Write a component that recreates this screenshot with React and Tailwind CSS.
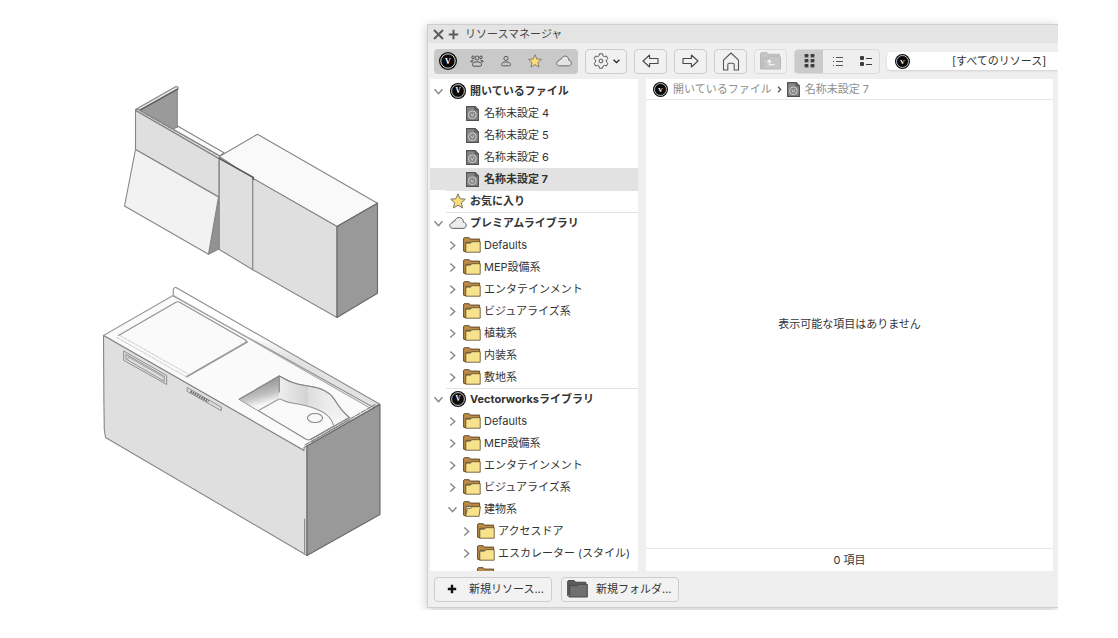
import { useState } from "react";
import clsx from "clsx";

function Logo({ size = 16 }) {
    return (
        <svg width={size} height={size} viewBox="0 0 20 20" className="shrink-0">
            <circle cx="10" cy="10" r="10" fill="#0a0a0a" />
            <circle cx="10" cy="10" r="8" fill="none" stroke="#f2f2f2" strokeWidth="1" />
            <text x="10" y="13" textAnchor="middle" fontSize="9" fontWeight="700" fontFamily="Liberation Serif, serif" fill="#fff">V</text>
        </svg>
    );
}

function FileIcon() {
    return (
        <svg width="13" height="15" viewBox="0 0 13 15" className="shrink-0">
            <path d="M.6.6h8.6l3.2 3.2v10.6H.6z" fill="#868686" stroke="#505050" strokeWidth="1.1" />
            <path d="M9 .8v3.2h3.2" fill="#6a6a6a" stroke="#505050" strokeWidth=".9" />
            <circle cx="6.3" cy="8.8" r="3.9" fill="none" stroke="#d4d4d4" strokeWidth=".9" />
            <path d="M4.8 7.4l1.5 3 1.5-3" fill="none" stroke="#d4d4d4" strokeWidth=".9" />
        </svg>
    );
}

function FolderIcon({ open }) {
    return (
        <svg width="18" height="16" viewBox="0 0 18 16" className="shrink-0">
            <path d="M.6 14.200V1.300l.6-.6h5l1 1.400h9.400v3.200H3v9.600z" fill="#bd8c45" stroke="#5e4c30" strokeWidth="1" strokeLinejoin="round" />
            {open ? (
                <path d="M2.600 15.300L4.400 7.200h3.800l1.200-1.500h8l-1.400 9.600z" fill="#f8e28c" stroke="#6a5a38" strokeWidth=".9" strokeLinejoin="round" />
            ) : (
                <path d="M2.800 15.200V6.200h4.700l1.200-1.500h8.500v10.500z" fill="#f8e28c" stroke="#6a5a38" strokeWidth=".9" strokeLinejoin="round" />
            )}
        </svg>
    );
}

function StarIcon({ size = 16 }) {
    return (
        <svg width={size} height={size} viewBox="0 0 16 16" className="shrink-0">
            <path d="M8 .9l2.100 4.800 5.200.5-3.900 3.500 1.100 5.200L8 12.200l-4.500 2.700 1.100-5.200L.7 6.200l5.200-.5z" fill="#fadd78" stroke="#7a7468" strokeWidth="1" strokeLinejoin="round" />
        </svg>
    );
}

function CloudIcon({ size = 18, fill = "#ececec" }) {
    return (
        <svg width={size} height="14" viewBox="0 0 18 14" className="shrink-0">
            <path d="M4.200 12.400C2 12.400.8 11.200.8 9.600c0-1.500 1-2.500 2.600-2.700C3.400 5.500 4.600 4.800 5.800 5 6.600 2.600 8.400 1.300 10.400 1.500c2.600.2 4 2.100 3.900 4.600 1.900.4 2.900 1.600 2.900 3.200 0 1.900-1.300 3.100-3.200 3.100z" fill={fill} stroke="#606060" strokeWidth="1" />
        </svg>
    );
}

function Chevron({ open }) {
    return (
        <svg width="11" height="11" viewBox="0 0 11 11" fill="none" stroke="#858585" strokeWidth="1.4" className="shrink-0">
            <path d={open ? "M1.500 3.300l4 4.400 4-4.400" : "M3.300 1.500l4.400 4-4.400 4"} />
        </svg>
    );
}

function GroupIcon() {
    return (
        <svg width="14" height="12" viewBox="0 0 14 12" fill="none" stroke="#505050" strokeWidth="1">
            <circle cx="3" cy="2.300" r="1.300" />
            <circle cx="11" cy="2.300" r="1.300" />
            <circle cx="7" cy="3" r="2" />
            <path d="M3.600 5.200C1.500 5.200.7 5.800.7 6.800h2.500M10.400 5.200c2.100 0 2.900.6 2.900 1.600h-2.500M2.500 9.800c0-2 1.500-2.900 4.500-2.900s4.500.9 4.500 2.900c0 .9-.5 1.400-1.400 1.400H3.900c-.9 0-1.400-.5-1.400-1.400z" />
        </svg>
    );
}

function UserIcon() {
    return (
        <svg width="12" height="12" viewBox="0 0 12 12" fill="none" stroke="#5a5a5a" strokeWidth="1">
            <circle cx="6" cy="3.400" r="2.100" />
            <path d="M1.500 9.600c0-1.800 1.500-2.600 4.500-2.600s4.500.8 4.500 2.600c0 .8-.4 1.200-1.200 1.200H2.700c-.8 0-1.200-.4-1.200-1.200z" />
        </svg>
    );
}

function GearIcon() {
    return (
        <svg width="16" height="16" viewBox="0 0 16 16" fill="none" stroke="#555" strokeWidth="1" strokeLinejoin="round">
            <path d="M6.500.8h3l.5 2 1.400.8 2-.6 1.500 2.600-1.500 1.400v2l1.500 1.400-1.500 2.600-2-.6-1.400.8-.5 2h-3l-.5-2-1.400-.8-2 .6-1.500-2.600L2.600 9V7L1.100 5.600 2.600 3l2 .6L6 2.800z" />
            <circle cx="8" cy="8" r="1.900" />
        </svg>
    );
}

function ArrowIcon({ flip }) {
    return (
        <svg width="17" height="14" viewBox="0 0 17 14" fill="none" stroke="#484848" strokeWidth="1.100" strokeLinejoin="round" className={flip ? "rotate-180" : ""}>
            <path d="M1 7l6.600-6v3.500H16v5H7.600V13z" />
        </svg>
    );
}

function HomeIcon() {
    return (
        <svg width="18" height="19" viewBox="0 0 18 19" fill="none" stroke="#555" strokeWidth="1.100" strokeLinejoin="round">
            <path d="M1.500 18V8.200L9 1l7.500 7.200V18h-4.300v-5.200c0-1-.7-1.600-1.600-1.600H7.400c-.9 0-1.600.6-1.600 1.600V18z" />
        </svg>
    );
}

function UpFolderIcon() {
    return (
        <svg width="21" height="18" viewBox="0 0 21 18">
            <path d="M.5 17V1.500l.7-.8h6l1.200 1.600h11.100V5h1v12z" fill="#c6c6c6" stroke="#b8b8b8" />
            <path d="M3 16.500V6h6l1.500-1.800h9.500" fill="none" stroke="#b8b8b8" />
            <path d="M9.300 8.300v4.300h5.200M7.300 10.300l2-2.300 2 2.300" fill="none" stroke="#f3f3f3" strokeWidth="1.200" />
        </svg>
    );
}

function GridIcon() {
    return (
        <svg width="11" height="14" viewBox="0 0 11 14" fill="#3c3c3c">
            {[0, 6].map((x) =>
                [0, 5, 10].map((y) => (
                    <g key={`${x}-${y}`}>
                        <rect x={x + 0.5} y={y} width="4" height="3" rx="1" />
                        <rect x={x + 0.5} y={y + 3.2} width="4" height=".8" opacity=".5" />
                    </g>
                ))
            )}
        </svg>
    );
}

function ListIcon() {
    return (
        <svg width="11" height="9" viewBox="0 0 11 9" fill="#555">
            {[0, 4, 8].map((y) => (
                <g key={y}>
                    <rect x="1" y={y} width="1" height="1" />
                    <rect x="4" y={y} width="7" height="1" />
                </g>
            ))}
        </svg>
    );
}

function DetailIcon() {
    return (
        <svg width="13" height="11" viewBox="0 0 13 11" fill="#3c3c3c">
            {[0, 6].map((y) => (
                <g key={y}>
                    <rect x="1" y={y} width="4" height="4" rx="1" />
                    <rect x="7" y={y + 2} width="6" height="1" />
                </g>
            ))}
        </svg>
    );
}

const premium = ["Defaults", "MEP設備系", "エンタテインメント", "ビジュアライズ系", "植栽系", "内装系", "敷地系"];
const library = ["Defaults", "MEP設備系", "エンタテインメント", "ビジュアライズ系"];

const rows = [
    { id: "open", label: "開いているファイル", level: 0, icon: "logo", open: true, bold: true },
    ...[4, 5, 6, 7].map((n) => ({ id: `file-${n}`, label: `名称未設定 ${n}`, level: 1, icon: "file" })),
    { id: "fav", label: "お気に入り", level: 0, icon: "star", bold: true, line: true },
    { id: "premium", label: "プレミアムライブラリ", level: 0, icon: "cloud", open: true, bold: true, line: true },
    ...premium.map((label) => ({ id: `p-${label}`, label, level: 1, icon: "folder", open: false })),
    { id: "vw", label: "Vectorworksライブラリ", level: 0, icon: "logo", open: true, bold: true, line: true },
    ...library.map((label) => ({ id: `v-${label}`, label, level: 1, icon: "folder", open: false })),
    { id: "building", label: "建物系", level: 1, icon: "folder", open: true },
    { id: "door", label: "アクセスドア", level: 2, icon: "folder", open: false },
    { id: "escalator", label: "エスカレーター (スタイル)", level: 2, icon: "folder", open: false },
    { id: "next", label: "", level: 2, icon: "folder" },
];

const indent = ["pl-[3px]", "pl-[17px]", "pl-[31px]"];

function RowIcon({ row }) {
    if (row.icon === "logo") return <Logo />;
    if (row.icon === "file") return <FileIcon />;
    if (row.icon === "star") return <StarIcon />;
    if (row.icon === "cloud") return <CloudIcon />;
    return <FolderIcon open={row.open} />;
}

function TreeRow({ row, selected, onSelect }) {
    return (
        <li className="relative h-[22px]">
            {row.line && <span className="absolute top-0 right-0 left-4 h-px bg-[#e2e2e2]" />}
            <button
                type="button"
                aria-label={row.label || "フォルダ"}
                onClick={() => onSelect(row.id)}
                className={clsx(
                    "flex h-full w-full items-center gap-[3px] whitespace-nowrap text-left",
                    indent[row.level],
                    selected && "bg-[#e2e2e2]",
                    (row.bold || selected) && "font-bold"
                )}
            >
                <span className="w-[13px] shrink-0">{row.open !== undefined && <Chevron open={row.open} />}</span>
                <span className="flex w-[18px] shrink-0 justify-center">
                    <RowIcon row={row} />
                </span>
                <span>{row.label}</span>
            </button>
        </li>
    );
}

function ToolButton({ label, className, children }) {
    return (
        <button
            type="button"
            aria-label={label}
            className={clsx("flex h-[25px] shrink-0 items-center justify-center rounded border border-[#cdcdcd] bg-[#f1f1f1]", className)}
        >
            {children}
        </button>
    );
}

function Toolbar() {
    const [view, setView] = useState("grid");
    const sources = [
        ["開いているファイル", <Logo size={18} />],
        ["ワークグループ", <GroupIcon />],
        ["ユーザ", <UserIcon />],
        ["お気に入り", <StarIcon size={14} />],
        ["ライブラリ", <CloudIcon size={16} fill="#e4e4e4" />],
    ];
    const views = [
        ["grid", "サムネイル", <GridIcon />],
        ["list", "リスト", <ListIcon />],
        ["detail", "詳細", <DetailIcon />],
    ];

    return (
        <div className="flex h-9 shrink-0 items-center gap-[7px] pl-1.5">
            <div className="flex h-[25px] w-36 shrink-0 rounded bg-[#c9c9c9]">
                {sources.map(([label, icon]) => (
                    <button key={label} type="button" aria-label={label} className="flex flex-1 items-center justify-center">
                        {icon}
                    </button>
                ))}
            </div>
            <ToolButton label="設定" className="w-[42px] gap-1">
                <GearIcon />
                <svg width="7" height="5" viewBox="0 0 7 5" fill="none" stroke="#222" strokeWidth="1.300">
                    <path d="M.6.8l2.900 2.900L6.400.8" />
                </svg>
            </ToolButton>
            <ToolButton label="戻る" className="w-[33px]"><ArrowIcon /></ToolButton>
            <ToolButton label="進む" className="w-[33px]"><ArrowIcon flip /></ToolButton>
            <ToolButton label="ホーム" className="w-[33px]"><HomeIcon /></ToolButton>
            <ToolButton label="上の階層へ" className="w-[33px] border-[#dcdcdc]"><UpFolderIcon /></ToolButton>
            <div className="flex h-[25px] w-[86px] shrink-0 overflow-hidden rounded border border-[#dadada]">
                {views.map(([id, label, icon]) => (
                    <button
                        key={id}
                        type="button"
                        aria-label={label}
                        onClick={() => setView(id)}
                        className={clsx("flex flex-1 items-center justify-center", view === id && "bg-[#cbcbcb]")}
                    >
                        {icon}
                    </button>
                ))}
            </div>
            <div className="relative min-w-0 flex-1">
                <span className="pointer-events-none absolute top-0 left-2 flex h-[18px] items-center">
                    <Logo size={15} />
                </span>
                <select aria-label="リソースの種類" className="block h-[18px] w-full appearance-none rounded-l bg-white pl-[65px] shadow-sm outline-none">
                    <option>[すべてのリソース]</option>
                </select>
            </div>
        </div>
    );
}

function ResourceManager() {
    const [selected, setSelected] = useState("file-7");

    return (
        <section className="flex h-full min-w-0 flex-1 flex-col overflow-hidden border-t border-b border-l border-[#cfcfcf] bg-[#efefef] shadow-[0_2px_10px_rgba(0,0,0,0.22)]">
            <header className="flex h-[18px] shrink-0 items-center bg-[#e4e4e4] pl-[5px] text-[#444]">
                <button type="button" aria-label="閉じる" className="flex w-[15px]">
                    <svg width="11" height="11" viewBox="0 0 11 11" stroke="#5c5c5c" strokeWidth="2"><path d="M1 1l9 9M10 1l-9 9" /></svg>
                </button>
                <button type="button" aria-label="拡大" className="flex w-[17px]">
                    <svg width="11" height="11" viewBox="0 0 11 11" stroke="#5c5c5c" strokeWidth="2"><path d="M5.500 .8v9.400M.8 5.500h9.400" /></svg>
                </button>
                <h1>リソースマネージャ</h1>
            </header>

            <Toolbar />

            <div className="flex min-h-0 flex-1 gap-2 pr-[5px] pl-0.5">
                <nav className="w-[208px] shrink-0 overflow-hidden bg-white pt-px">
                    <ul>
                        {rows.map((row) => (
                            <TreeRow key={row.id} row={row} selected={row.id === selected} onSelect={setSelected} />
                        ))}
                    </ul>
                </nav>

                <main className="flex min-w-0 flex-1 flex-col bg-white">
                    <div className="flex h-[21px] shrink-0 items-center gap-[5px] border-b border-[#e6e6e6] pl-[7px] text-[#8e8e8e]">
                        <Logo size={15} />
                        <span>開いているファイル</span>
                        <svg width="5" height="7" viewBox="0 0 5 7" fill="none" stroke="#555" strokeWidth="1.300"><path d="M1 .8l2.700 2.700L1 6.200" /></svg>
                        <FileIcon />
                        <span>名称未設定 7</span>
                    </div>
                    <div className="flex flex-1 items-center justify-center">
                        <p>表示可能な項目はありません</p>
                    </div>
                    <footer className="flex h-[23px] shrink-0 items-center justify-center border-t border-[#e6e6e6]">0 項目</footer>
                </main>
            </div>

            <div className="flex h-9 shrink-0 items-center gap-[9px] pl-1.5">
                <button type="button" className="flex h-[25px] w-[118px] items-center gap-3 whitespace-nowrap rounded border border-[#cdcdcd] bg-[#f2f2f2] pl-3">
                    <svg width="10" height="10" viewBox="0 0 10 10" stroke="#111" strokeWidth="2.400"><path d="M5 .8v8.400M.8 5h8.400" /></svg>
                    新規リソース...
                </button>
                <button type="button" className="flex h-[25px] w-[118px] items-center gap-2 whitespace-nowrap rounded border border-[#cdcdcd] bg-[#f2f2f2] pl-[5px]">
                    <svg width="21" height="18" viewBox="0 0 21 18" fill="#707070" stroke="#484848">
                        <path d="M.7 15.800V1.200l.6-.6h6l1.200 1.600h10.300V5" fill="#5c5c5c" />
                        <path d="M.7 15.800l2 1.200h17.600V4.300h-8.500L10.500 5.700H2.700V17" />
                    </svg>
                    新規フォルダ...
                </button>
            </div>
        </section>
    );
}

function WallCabinet() {
    return (
        <g>
            <path d="M172 129l6-2.800 46 26.600-4.500 3.500z" fill="#fafafa" />
            <path d="M140 110.500l37.300-20.800v37.600L172 129z" fill="#9a9a9a" />
            <path d="M135.500 109.500L176 86.500l2 .8v2L140 110.500z" fill="#e6e6e6" />
            <path d="M140 110l37.500-21" stroke="#555" strokeWidth="1.300" />
            <path d="M135.500 110l2-1 82.500 47-1 2.500z" fill="#e9e9e9" />
            <path d="M139.500 110.300l80.500 46" strokeDasharray="5 1.500" />
            <path d="M135.500 110.500l83.500 48.300v38.200l-83.500-47.500z" fill="#dfdfdf" />
            <path d="M218.800 197v52l-10.300 5.300z" fill="#929292" />
            <path d="M135.500 149.500l83 47.500-10 57.300-84-48.300z" fill="#f2f2f2" />
            <path d="M219.300 156.500l38.200-22.300 120 69-40.500 23.300-84-47.700z" fill="#f9f9f9" />
            <path d="M219.300 158.500l33.500 19v92.200l-33.500-20.200z" fill="#dfdfdf" />
            <path d="M252.800 178.200l84.200 48.300v91l-84.200-47.800z" fill="#dfdfdf" />
            <path d="M337 226.500l40.500-23.300v90L337 317.500z" fill="#999" stroke="#686868" />
            <path d="M219.300 158.300l34 19v2" stroke="#5a5a5a" strokeWidth="1.500" />
        </g>
    );
}

function SinkUnit() {
    return (
        <g>
            <path d="M103.500 335.500L173 295.500l206 109L307 446l-3 4.500z" fill="#fafafa" stroke="#999" />
            <path d="M173.300 296v-6c.2-1.900 1.200-2.700 2.700-2.500l203.500 116.500-6 3.500z" fill="url(#splash)" stroke="#8c8c8c" />
            <path d="M173.500 295.500L370 408" stroke="#aaa" />
            <path d="M103.500 335.500L304 450.500v-3l3-1.500v109.500l-2.500-1.500L105.500 437.500l-1.200-8-.4-28z" fill="#dfdfdf" />
            <path d="M304.700 519v34" />
            <path d="M307 446l73-41.500v110l-73 41z" fill="#999" stroke="#686868" />
            <path d="M305 445l70-40.500" stroke="#888" strokeDasharray="5 1.500" />

            {/* cooktop */}
            <path d="M118.500 335.500l57.500-33.300q1.800-1 3.600 0l65.900 37.800q1.800 1.200 0 2.300" stroke="#909090" />
            <path d="M187 376.500l60-34.500" stroke="#999" strokeWidth="2" />
            <path d="M117 337.500l69.500 39.500M120 335.500l67 38" stroke="#d2d2d2" strokeDasharray="3 1.500" />

            {/* handle and control panel */}
            <g strokeWidth=".9">
                <path d="M124 351.200l42.700 24.300v9L124 360.500z" />
                <path d="M126.300 354.500l38 21.800v5L126.300 359.300z" />
                <path d="M128 359v-2.200l35.500 20.500" stroke="#a0a0a0" />
                <path d="M187.500 387.700l33.800 19.500v3.500l-33.800-19.200z" />
                <path d="M190.500 391.300l18 10.200" stroke="#666" strokeWidth="2.500" strokeDasharray="1.500 1" strokeLinecap="butt" />
            </g>

            {/* basin */}
            <path d="M239.300 399.300l40-23.300c9 5.200 16 8.700 30 10.300 12 1.700 20 5 25 13 4 7 7 11.500 15 18.200L310.500 439.500q-2 .8-4 0z" fill="#f9f9f9" />
            <path d="M239.300 399.300l40-23.300v23l-20.800 11.500z" fill="url(#wall)" stroke="none" />
            <path d="M279.300 376c9 5.200 16 8.700 30 10.300 12 1.700 20 5 25 13 4 7 7 11.500 15 18.200l-15.800 8.700c-1.800-9.200-11.300-15-23.200-18.500-12.500-3.700-21.500-3.100-27.500-6.700L279.300 399z" fill="url(#curve)" stroke="none" />
            <path d="M279.300 376c9 5.200 16 8.700 30 10.300 12 1.700 20 5 25 13 4 7 7 11.500 15 18.200l-15.800 8.700c-1.800-9.200-11.300-15-23.200-18.500-12.500-3.700-21.500-3.100-27.500-6.700L279.300 399z" fill="url(#fade)" stroke="none" />
            <path d="M239.300 399.300l40-23.300c9 5.200 16 8.700 30 10.300 12 1.700 20 5 25 13 4 7 7 11.500 15 18.200" />
            <path d="M279.300 376v16" />
            <path d="M258.500 410.500l20-11.200q2-.9 4 .7c6 3.600 15 3 27.500 6.700 12 3.600 21.500 9.300 23.300 18.500" stroke="#999" />
            <ellipse cx="315" cy="418" rx="7.500" ry="4.500" />
            <path d="M349.300 417.500L310.500 439.500M311 442l39-22.500" />
        </g>
    );
}

function App() {
    return (
        <div className="flex h-screen overflow-hidden bg-white pr-[60px] font-['Inter','Noto_Sans_CJK_JP',sans-serif] text-[11px] leading-4 text-[#333]">
            <div className="w-[427px] shrink-0 pt-20 pl-[100px]">
                <svg width="290" height="485" viewBox="100 80 290 485" fill="none" stroke="#868686" strokeWidth="1.100" strokeLinejoin="round" strokeLinecap="round">
                    <defs>
                        <linearGradient id="wall" x1=".3" y1="0" x2=".6" y2="1">
                            <stop offset=".3" stopColor="#a0a0a0" />
                            <stop offset=".6" stopColor="#c4c4c4" />
                            <stop offset=".85" stopColor="#f9f9f9" />
                        </linearGradient>
                        <linearGradient id="curve" x1="0" y1="0" x2="1" y2="0">
                            <stop offset="0" stopColor="#efefef" />
                            <stop offset=".4" stopColor="#d2d2d2" />
                            <stop offset=".42" stopColor="#dedede" />
                            <stop offset=".7" stopColor="#ececec" />
                            <stop offset="1" stopColor="#f2f2f2" />
                        </linearGradient>
                        <linearGradient id="fade" x1=".15" y1=".2" x2="0" y2=".65">
                            <stop offset=".5" stopColor="#f9f9f9" stopOpacity="0" />
                            <stop offset="1" stopColor="#f9f9f9" stopOpacity=".7" />
                        </linearGradient>
                        <linearGradient id="splash" x1=".52" y1=".45" x2=".48" y2=".55">
                            <stop offset="0" stopColor="#fff" />
                            <stop offset="1" stopColor="#e2e2e2" />
                        </linearGradient>
                    </defs>
                    <WallCabinet />
                    <SinkUnit />
                </svg>
            </div>
            <div className="mb-7 -ml-4 flex min-w-0 flex-1 overflow-hidden pt-6 pb-0.5 pl-4">
                <ResourceManager />
            </div>
        </div>
    );
}

export default App;
